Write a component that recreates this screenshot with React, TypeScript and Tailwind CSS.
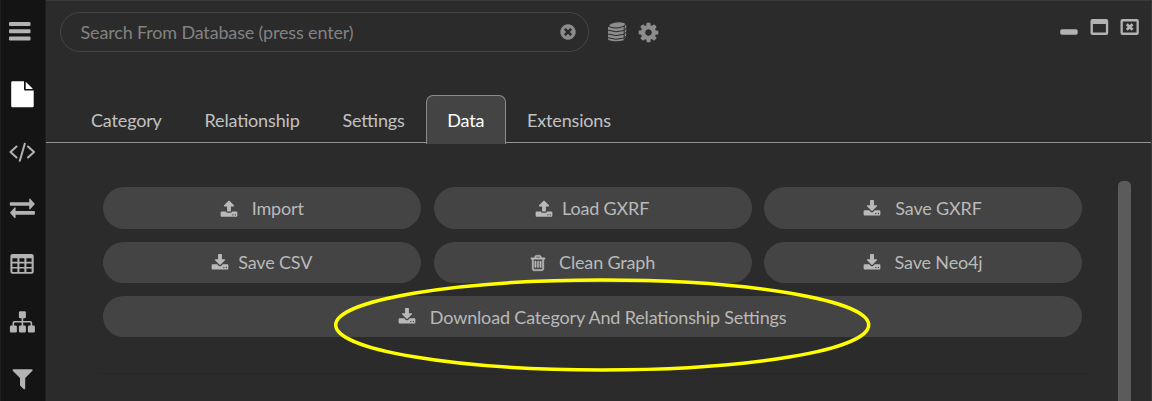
import type { ReactNode } from "react";

const downloadPath =
  "M1344 1344q0-26-19-45t-45-19-45 19-19 45 19 45 45 19 45-19 19-45zm256 0q0-26-19-45t-45-19-45 19-19 45 19 45 45 19 45-19 19-45zm128-224v320q0 40-28 68t-68 28h-1472q-40 0-68-28t-28-68v-320q0-40 28-68t68-28h465l135 136q58 56 136 56t136-56l136-136h464q40 0 68 28t28 68zm-325-569q17 41-14 70l-448 448q-18 19-45 19t-45-19l-448-448q-31-29-14-70 17-39 59-39h256v-448q0-26 19-45t45-19h256q26 0 45 19t19 45v448h256q42 0 59 39z";
const uploadPath =
  "M1344 1472q0-26-19-45t-45-19-45 19-19 45 19 45 45 19 45-19 19-45zm256 0q0-26-19-45t-45-19-45 19-19 45 19 45 45 19 45-19 19-45zm128-224v320q0 40-28 68t-68 28h-1472q-40 0-68-28t-28-68v-320q0-40 28-68t68-28h427q21 56 70.5 92t110.5 36h256q61 0 110.5-36t70.5-92h427q40 0 68 28t28 68zm-325-648q-17 40-59 40h-256v448q0 26-19 45t-45 19h-256q-26 0-45-19t-19-45v-448h-256q-42 0-59-40-17-39 14-69l448-448q18-19 45-19t45 19l448 448q31 30 14 69z";
const trashPath =
  "M704 736v576q0 14-9 23t-23 9h-64q-14 0-23-9t-9-23v-576q0-14 9-23t23-9h64q14 0 23 9t9 23zm256 0v576q0 14-9 23t-23 9h-64q-14 0-23-9t-9-23v-576q0-14 9-23t23-9h64q14 0 23 9t9 23zm256 0v576q0 14-9 23t-23 9h-64q-14 0-23-9t-9-23v-576q0-14 9-23t23-9h64q14 0 23 9t9 23zm128 724v-948h-896v948q0 22 7 40.5t14.5 27 10.5 8.5h832q3 0 10.5-8.5t14.5-27 7-40.5zm-672-1076h448l-48-117q-7-9-17-11h-317q-10 2-17 11zm928 32v64q0 14-9 23t-23 9h-96v948q0 83-47 143.5t-113 60.5h-832q-66 0-113-58.5t-47-141.5v-952h-96q-14 0-23-9t-9-23v-64q0-14 9-23t23-9h309l70-167q15-37 54-63t79-26h320q40 0 79 26t54 63l70 167h309q14 0 23 9t9 23z";
const cogPath =
  "M1152 896q0-106-75-181t-181-75-181 75-75 181 75 181 181 75 181-75 75-181zm512-109v222q0 12-8 23t-20 13l-185 28q-19 54-39 91 35 50 107 138 10 12 10 25t-9 23q-27 37-99 108t-94 71q-12 0-26-9l-138-108q-44 23-91 38-16 136-29 186-7 28-36 28h-222q-14 0-24.5-8.5t-11.5-21.5l-28-184q-49-16-90-37l-141 107q-10 9-25 9-14 0-25-11-126-114-165-168-7-10-7-23 0-12 8-23 15-21 51-66.5t54-70.5q-27-50-41-99l-183-27q-13-2-21-12.5t-8-23.5v-222q0-12 8-23t19-13l186-28q14-46 39-92-40-57-107-138-10-12-10-24 0-10 9-23 26-36 98.5-107.5t94.5-71.5q13 0 26 10l138 107q44-23 91-38 16-136 29-186 7-28 36-28h222q14 0 24.5 8.5t11.5 21.5l28 184q49 16 90 37l142-107q9-9 24-9 13 0 25 10 129 119 165 170 7 8 7 22 0 12-8 23-15 21-51 66.5t-54 70.5q26 50 41 98l183 28q13 2 21 12.5t8 23.5z";
const clearPath =
  "M1277 1122q0-26-19-45l-181-181 181-181q19-19 19-45 0-27-19-46l-90-90q-19-19-46-19-26 0-45 19l-181 181-181-181q-19-19-45-19-27 0-46 19l-90 90q-19 19-19 46 0 26 19 45l181 181-181 181q-19 19-19 45 0 27 19 46l90 90q19 19 46 19 26 0 45-19l181-181 181 181q19 19 45 19 27 0 46-19l90-90q19-19 19-46zm387-226q0 209-103 385.5t-279.5 279.5-385.5 103-385.5-103-279.5-279.5-103-385.5 103-385.5 279.5-279.5 385.5-103 385.5 103 279.5 279.5 103 385.5z";

function RailIcon({ className, children }: { className: string; children: ReactNode }) {
  return (
    <button className={`block w-[26px] shrink-0 ${className}`}>
      <svg viewBox="0 0 26 28" className="block h-[28px] w-[26px]" fill="currentColor">
        {children}
      </svg>
    </button>
  );
}

function Rail() {
  return (
    <nav className="flex w-[46px] shrink-0 flex-col border-r border-l border-r-[#202020] border-l-[#1f1f1f] bg-[#141414] pl-2 text-[#b3b3b3]">
      <RailIcon className="mt-[17px]">
        <rect x="0" y="5" width="21.5" height="4" rx="1" />
        <rect x="0" y="12.2" width="21.5" height="4" rx="1" />
        <rect x="0" y="19.4" width="21.5" height="4" rx="1" />
      </RailIcon>
      <RailIcon className="mt-[36px] text-white">
        <path d="M3.500.3H15v8.200q0 1 1 1h8.700V25q0 1.300-1.300 1.300H3.500Q2.200 26.300 2.200 25V1.600Q2.200.3 3.500.3zM16.700 1q.5.200.8.500l5.600 5.500q.3.300.5.900h-6.900z" />
      </RailIcon>
      <RailIcon className="mt-[29px]">
        <g fill="none" stroke="currentColor" strokeWidth="2" strokeLinecap="round" strokeLinejoin="round">
          <path d="M7.500 8.500l-6 5.500 6 5.500M19 8.500l6 5.500-6 5.500M15.800 5.800l-5 17" />
        </g>
      </RailIcon>
      <RailIcon className="mt-[29px]">
        <path d="M1.500 7.200h18.700V4l.8-.6 4.900 5.500-4.900 5.700-.8-.6v-3.200H1.500q-.7 0-.7-.7V7.900q0-.7.7-.7z" />
        <path d="M25.200 16H6.600v-3.200l-.8-.5L.9 17.800l4.900 5.500.8-.6v-3h18.600q.7 0 .7-.7v-2.300q0-.7-.7-.7z" />
      </RailIcon>
      <RailIcon className="mt-[27px]">
        <path
          fillRule="evenodd"
          d="M3.400 4h19.300q2 0 2 2v15.800q0 2-2 2H3.400q-2 0-2-2V6q0-2 2-2zM3.400 8.200v3.500h5V8.200zm7 0v3.500h5V8.200zm7 0v3.500h5.200V8.200zM3.400 13.400v3.500h5v-3.500zm7 0v3.500h5v-3.500zm7 0v3.500h5.200v-3.500zM3.400 18.600v3.400h5v-3.400zm7 0v3.400h5v-3.400zm7 0v3.400h5.200v-3.400z"
        />
      </RailIcon>
      <RailIcon className="mt-[30px]">
        <rect x="9.9" y="3.2" width="7" height="7" rx="1.3" />
        <rect x="0.9" y="17.6" width="7" height="7" rx="1.3" />
        <rect x="9.9" y="17.6" width="7" height="7" rx="1.3" />
        <rect x="18.9" y="17.6" width="7" height="7" rx="1.3" />
        <path d="M13.400 9v9M4.300 18v-3q0-1.200 1.200-1.200h15.700q1.200 0 1.200 1.200v3" fill="none" stroke="currentColor" strokeWidth="1.6" />
      </RailIcon>
      <RailIcon className="mt-[29px]">
        <path d="M4.200 4.200h18.200q1 0 1.200.6.200.7-.4 1.300l-7 7v10.400q0 1.100-1.300.7l-3.400-3.300q-.5-.5-.5-1.100v-6.700l-7-7q-.6-.6-.4-1.300.1-.6.600-.6z" />
      </RailIcon>
    </nav>
  );
}

function TopBar() {
  return (
    <header className="flex h-[93px] items-start pt-[11px] pl-3.5 text-[#8c8c8c]">
      <div className="flex h-10 w-[529px] items-center justify-between rounded-full border-[1.5px] border-[#454545] pr-[11px] pl-[19.5px]">
        <span className="text-[18px] leading-6 text-[#828282]">Search From Database (press enter)</span>
        <svg viewBox="0 0 1792 1792" className="h-[18px] w-[18px]" fill="currentColor">
          <path d={clearPath} />
        </svg>
      </div>
      <svg viewBox="0 0 20 20" className="mt-2.5 ml-[18px] h-5 w-5" fill="currentColor">
        <path d="M1 5.300L3.600 2Q10-.7 17 1l2.200 2v11.500L17 18.200Q8 20.600 1.500 18L1 17z" />
        <path
          d="M1 4.200q8 3.700 16 0l2-2.500M.8 8.200q8 3 16.400.3L19.500 6M.8 12q8 3 16.400.3l2.300-2.500M.8 15.700q8 3 16.400.3l2.300-2.500M17.200 4v14.200"
          fill="none"
          stroke="#2b2b2b"
          strokeWidth="1"
        />
      </svg>
      <svg viewBox="0 0 1792 1792" className="mt-[9px] ml-[10px] h-[23px] w-[23px]" fill="currentColor">
        <path d={cogPath} />
      </svg>
      <svg viewBox="0 0 80 18" className="mt-[6px] mr-[11px] ml-auto h-[18px] w-20" fill="#b3b3b3">
        <rect x="0.2" y="11.3" width="17.5" height="5.4" rx="1.7" />
        <path fillRule="evenodd" d="M32.500 1h13.700q2 0 2 2v12q0 2-2 2H32.500q-2 0-2-2V3q0-2 2-2zm.4 5v8.600h13V6z" />
        <path fillRule="evenodd" d="M62.500 1h14.300q2 0 2 2v12q0 2-2 2H62.500q-2 0-2-2V3q0-2 2-2zm.3 2.400v11.200h13.700V3.400z" />
        <path d="M66.800 6.200l5.800 5.600M72.600 6.200l-5.800 5.600" stroke="#b3b3b3" strokeWidth="2.7" />
      </svg>
    </header>
  );
}

function Tabs() {
  const tab = "flex h-[48px] shrink-0 items-center pt-[4px]";
  return (
    <div className="flex h-[49px] items-start border-b-[1.5px] border-[#919191] pl-[45px] text-[18px] text-[#c2c2c2]">
      <div className={`${tab} w-[113.5px]`}>Category</div>
      <div className={`${tab} w-[138px]`}>Relationship</div>
      <div className={`${tab} w-[83.5px]`}>Settings</div>
      <div className="mt-px flex h-[49px] w-[79.5px] shrink-0 items-center justify-center rounded-t-[7px] border border-b-0 border-[#8b8b8b] bg-[#444] text-white">
        Data
      </div>
      <div className={`${tab} pl-[21.5px]`}>Extensions</div>
    </div>
  );
}

type Action = { label: string; path: string; gap: string; span?: boolean };

const actions: Action[] = [
  { label: "Import", path: uploadPath, gap: "gap-[14px]" },
  { label: "Load GXRF", path: uploadPath, gap: "gap-[9px]" },
  { label: "Save GXRF", path: downloadPath, gap: "gap-[14px]" },
  { label: "Save CSV", path: downloadPath, gap: "gap-[9px]" },
  { label: "Clean Graph", path: trashPath, gap: "gap-[12px]" },
  { label: "Save Neo4j", path: downloadPath, gap: "gap-[14px]" },
  { label: "Download Category And Relationship Settings", path: downloadPath, gap: "gap-[14px]", span: true },
];

function ActionButton({ label, path, gap, span }: Action) {
  return (
    <button
      className={`flex h-[41.5px] items-center justify-center rounded-full bg-[#444] pt-px pr-px text-[18px] text-[#b9b9b9] ${gap} ${span ? "col-span-3" : ""}`}
    >
      <svg
        viewBox="0 0 1792 1792"
        className={`h-[18px] w-[18px] shrink-0 ${path === trashPath ? "stroke-current stroke-[50]" : ""}`}
        fill="currentColor"
      >
        <path d={path} />
      </svg>
      <span className="whitespace-nowrap">{label}</span>
    </button>
  );
}

export default function App() {
  return (
    <div className="relative flex h-[401px] w-[1152px] overflow-hidden bg-[#2b2b2b] font-['Lato',sans-serif] tracking-[-0.16px] [font-feature-settings:'liga'_1]">
      <Rail />
      <main className="flex min-w-0 grow flex-col border-t border-r border-[#393939]">
        <TopBar />
        <Tabs />
        <section className="flex grow items-start pt-[38px] pl-[57.3px]">
          <div className="w-[978.7px] shrink-0 pt-[6.4px]">
            <div className="grid grid-cols-3 gap-x-[12.5px] gap-y-[12.8px]">
              {actions.map((action) => (
                <ActionButton key={action.label} {...action} />
              ))}
            </div>
            <hr className="mt-[36px] -ml-[5px] w-[990px] border-[#272727]" />
          </div>
          <div className="ml-9 h-[220px] w-[13px] rounded-t-[5px] bg-[#5b5b5b]" />
        </section>
      </main>
      <svg viewBox="0 0 540 96" className="pointer-events-none absolute top-[277px] left-[332px] h-24 w-[540px]" fill="none">
        <ellipse cx="270.2" cy="48" rx="266.5" ry="45" stroke="#ffff00" strokeWidth="3.5" />
      </svg>
    </div>
  );
}
